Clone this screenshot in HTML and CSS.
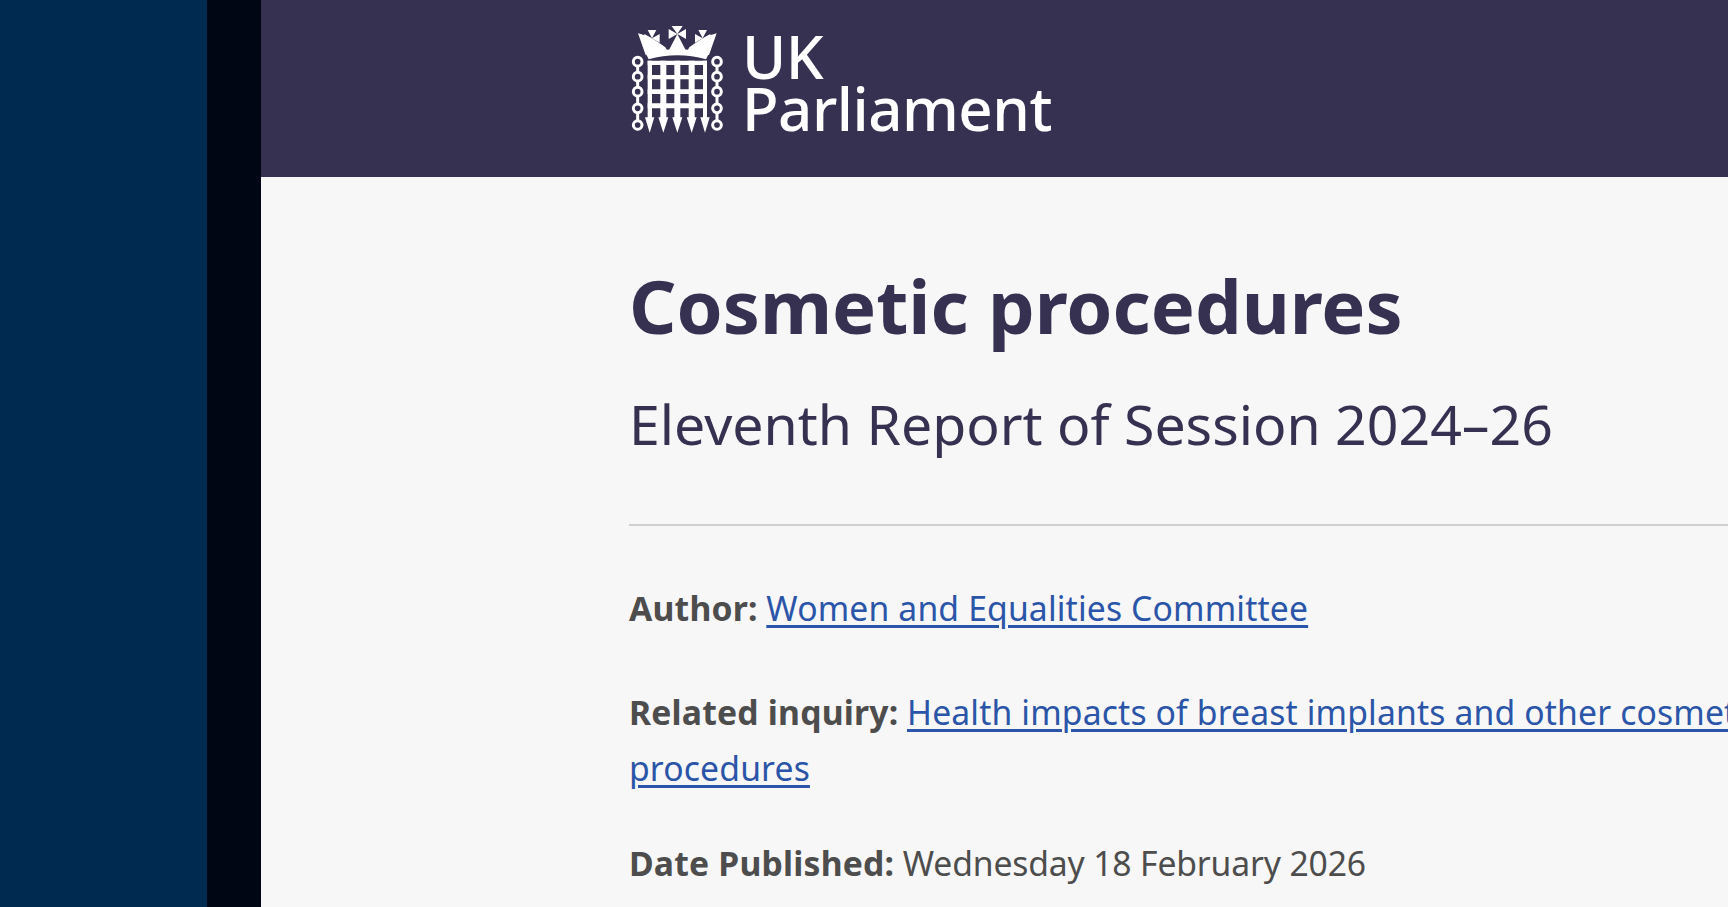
FILE: index.html
```html
<!DOCTYPE html>
<html lang="en">
<head>
    <meta charset="UTF-8">
    <meta name="viewport" content="width=device-width, initial-scale=1.0">
    <title>Cosmetic procedures</title>
    <link rel="stylesheet" href="styles.css">
</head>
<body>
    <div class="rail"></div>
    <div class="rail-dark"></div>
    <div class="page">
        <header class="masthead">
            <a class="logo" href="#">
                <svg class="logo-mark" viewBox="62 48 276 321" width="92" height="107" aria-hidden="true">
                    <defs>
                        <g id="half">
                            <!-- crown wing and side cross -->
                            <path d="M83 70l20 6 4 12 18-3 23 15 17 12 8 14-67 9z"/>
                            <path d="M112 60h26l-13 25zM102 72l23 13-23 13zM148 72l-23 13 23 13z"/>
                            <!-- chain -->
                            <g fill="none" stroke="#fff" stroke-width="9">
                                <circle cx="82" cy="155" r="13"/>
                                <circle cx="82" cy="200" r="13"/>
                                <circle cx="82" cy="245" r="13"/>
                                <circle cx="82" cy="295" r="13"/>
                                <circle cx="82" cy="345" r="13"/>
                                <path d="M82 168v19M82 213v19M82 258v24M82 308v24"/>
                            </g>
                        </g>
                    </defs>
                    <g fill="#fff">
                        <use href="#half"/>
                        <use href="#half" transform="matrix(-1 0 0 1 402 0)"/>
                        <!-- crown middle -->
                        <path d="M184 48h33l-16 24zM175 57l26 15-26 15zM227 57l-26 15 26 15zM201 72l28 54q-28-5-56 0z"/>
                        <path d="M106 130q95-24 190 0l-9 18q-86-24-172 0z"/>
                        <!-- portcullis -->
                        <path d="M112 152h13v173h-13zM150 152h18v173h-18zM192 152h18v173h-18zM235 152h18v173h-18zM278 152h12v173h-12z"/>
                        <path d="M112 152h178v13h-178zM112 195h178v13h-178zM112 238h178v14h-178zM112 280h178v15h-178z"/>
                        <path d="M104 322h28l-14 46zM144 322h30l-15 46zM186 322h30l-15 46zM229 322h30l-15 46zM270 322h28l-14 46z"/>
                    </g>
                </svg>
                <span class="logo-text">UK<br>Parliament</span>
            </a>
        </header>
        <main class="content">
            <h1 class="title">Cosmetic procedures</h1>
            <p class="subtitle">Eleventh Report of Session 2024–26</p>
            <hr class="rule">
            <p class="meta meta-author"><strong>Author:</strong> <a href="#">Women and Equalities Committee</a></p>
            <p class="meta meta-inquiry"><strong>Related inquiry:</strong> <a href="#">Health impacts of breast implants and other cosmetic procedures</a></p>
            <p class="meta meta-date"><strong>Date Published:</strong> Wednesday 18 February 2026</p>
        </main>
    </div>
</body>
</html>
```

FILE: styles.css
```css
* { margin: 0; padding: 0; box-sizing: border-box; }
html, body { height: 100%; }
body { display: flex; overflow: hidden; background-color: #f7f7f7; font-family: "Noto Sans", sans-serif; }
.rail { flex: 0 0 207px; background-color: #002a4f; }
.rail-dark { flex: 0 0 54px; background-color: #000614; }
.page { flex: 1 0 auto; min-width: 1467px; }
.masthead { height: 177px; background-color: #373151; padding: 26px 0 0 370px; }
.logo { display: flex; gap: 19px; color: #fff; text-decoration: none; }
.logo-mark { display: block; flex: none; }
.logo-text { margin-top: 4px; font-size: 60px; line-height: 52px; font-weight: 500; letter-spacing: -0.5px; }
.content { width: 1200px; margin-left: 368px; padding-top: 86px; }
.title { font-size: 74px; line-height: 86px; font-weight: 700; color: #373151; }
.subtitle { margin-top: 43px; font-size: 55.4px; line-height: 64px; color: #373151; }
.rule { margin-top: 68px; border: none; border-top: 2px solid #cfcfcf; }
.meta { font-size: 33.7px; line-height: 56px; color: #4d4d4d; letter-spacing: -0.15px; }
.meta strong { letter-spacing: 0.2px; }
.meta a { color: #2a55a8; letter-spacing: 0.15px; text-decoration-thickness: 3px; text-underline-offset: 4px; }
.meta-author { margin-top: 54px; }
.meta-inquiry { margin-top: 48px; }
.meta-date { margin-top: 39px; }
```
